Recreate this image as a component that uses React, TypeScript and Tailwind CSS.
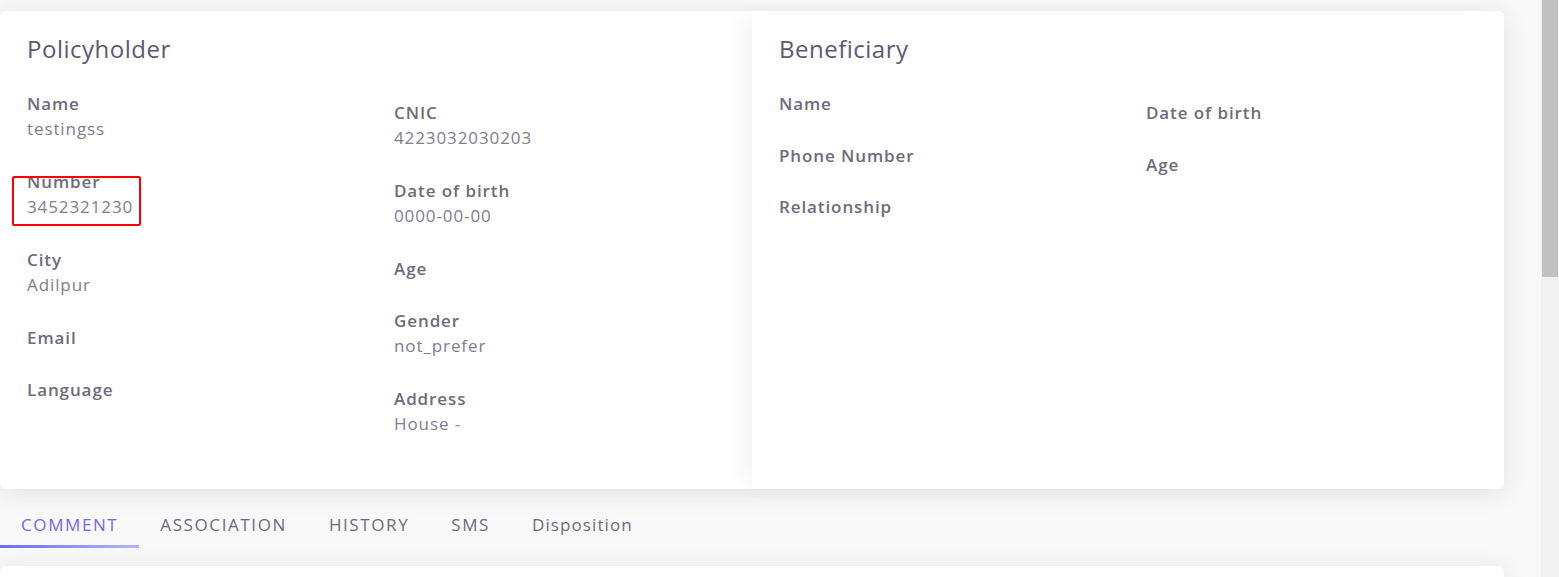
import React from "react";

type Field = { label: string; value?: string; mark?: boolean };

const holderLeft: Field[] = [
  { label: "Name", value: "testingss" },
  { label: "Number", value: "3452321230", mark: true },
  { label: "City", value: "Adilpur" },
  { label: "Email" },
  { label: "Language" },
];

const holderRight: Field[] = [
  { label: "CNIC", value: "4223032030203" },
  { label: "Date of birth", value: "0000-00-00" },
  { label: "Age" },
  { label: "Gender", value: "not_prefer" },
  { label: "Address", value: "House -" },
];

const benLeft: Field[] = [{ label: "Name" }, { label: "Phone Number" }, { label: "Relationship" }];
const benRight: Field[] = [{ label: "Date of birth" }, { label: "Age" }];

const tabs = ["COMMENT", "ASSOCIATION", "HISTORY", "SMS", "Disposition"];

const FieldItem = ({ f }: { f: Field }) => (
  <div className={`relative ${f.value ? "mb-[28px]" : "mb-[26.5px]"} last:mb-0`}>
    <div className="text-[17px] leading-[25px] font-semibold tracking-[0.9px] text-[#6e6b7b]">{f.label}</div>
    {f.value && (
      <div className="text-[17px] leading-[25px] tracking-[0.9px] text-[#807d8e]">{f.value}</div>
    )}
    {f.mark && (
      <div className="absolute left-[-15px] top-[7px] w-[129px] h-[50px] border-2 border-[#ff0000] rounded-[2px]" />
    )}
  </div>
);

const Column = ({ items, className = "" }: { items: Field[]; className?: string }) => (
  <div className={className}>
    {items.map((f) => (
      <FieldItem key={f.label} f={f} />
    ))}
  </div>
);

const Panel = ({
  title,
  left,
  right,
  className = "",
}: {
  title: string;
  left: Field[];
  right: Field[];
  className?: string;
}) => (
  <div className={`w-1/2 px-[27px] pt-[23px] ${className}`}>
    <h2 className="text-[24px] leading-[30px] text-[#5e5873] font-normal tracking-[0.5px]">{title}</h2>
    <div className="grid grid-cols-[367px_1fr] mt-[27px]">
      <Column items={left} />
      <Column items={right} className="pt-[9px]" />
    </div>
  </div>
);

export default function App() {
  return (
    <div
      className="flex h-[577px] overflow-hidden bg-[#f8f8f8]"
      style={{ fontFamily: '"Open Sans", "Liberation Sans", sans-serif' }}
    >
      <div className="flex-1 pt-[11px] pr-[37px]">
        <div className="flex h-[478px] bg-white rounded-md shadow-[0_4px_24px_0_rgba(34,41,47,0.1)]">
          <Panel title="Policyholder" left={holderLeft} right={holderRight} />
          <Panel
            title="Beneficiary"
            left={benLeft}
            right={benRight}
            className="relative z-10 bg-white rounded-r-md shadow-[-14px_0_22px_-8px_rgba(34,41,47,0.07)]"
          />
        </div>

        <div className="flex mt-[24px]">
          {tabs.map((t, i) => (
            <div key={t} className="relative px-[21px] pb-[11px]">
              <span
                className={`text-[17px] leading-[24px] ${
                  t === "Disposition" ? "tracking-[1.1px]" : "tracking-[1.6px]"
                } ${i === 0 ? "text-[#7367f0]" : "text-[#6e6b7b]"}`}
              >
                {t}
              </span>
              {i === 0 && (
                <div className="absolute left-0 right-0 bottom-0 h-[3px] bg-gradient-to-r from-[#7367f0] to-[#b9b3f6]" />
              )}
            </div>
          ))}
        </div>

        <div className="mt-[18px] h-[40px] bg-white rounded-md shadow-[0_4px_24px_0_rgba(34,41,47,0.1)]" />
      </div>

      <div className="w-[18px] bg-[#f1f1f1] pl-[1px] pr-[1px]">
        <div className="h-[277px] bg-[#c1c1c1]" />
      </div>
    </div>
  );
}
